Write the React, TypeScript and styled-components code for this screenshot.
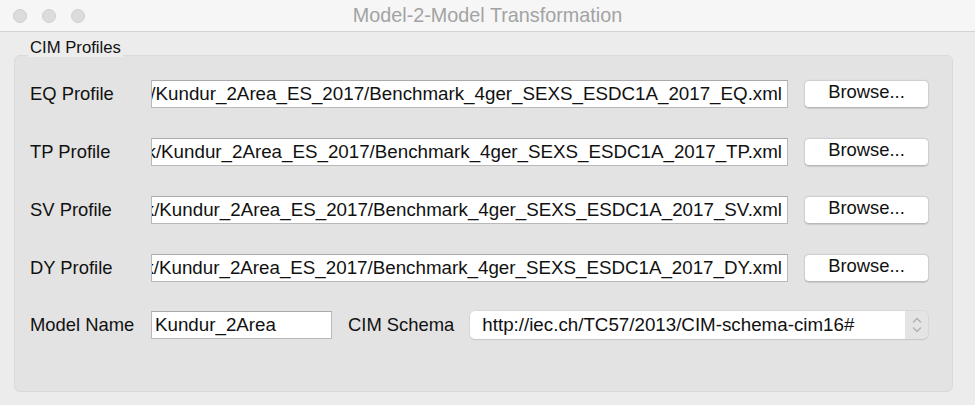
import React from 'react';
import styled, { createGlobalStyle } from 'styled-components';

const GlobalStyle = createGlobalStyle`
  html, body {
    margin: 0;
    padding: 0;
    background: #ececec;
  }
  body {
    font-family: "Liberation Sans", Arial, Helvetica, sans-serif;
    color: #111;
  }
`;

const Window = styled.div`
  width: 975px;
  height: 405px;
  background: #ececec;
  display: flex;
  flex-direction: column;
  overflow: hidden;
`;

const TitleBar = styled.div`
  height: 31px;
  flex: none;
  background: #f6f6f6;
  border-bottom: 1px solid #d3d3d3;
  position: relative;
  display: flex;
  align-items: center;
  justify-content: center;
`;

const Lights = styled.div`
  position: absolute;
  left: 13px;
  top: 9px;
  display: flex;
  gap: 15px;
`;

const Light = styled.span`
  width: 14px;
  height: 14px;
  box-sizing: border-box;
  border-radius: 50%;
  background: #dcdcdc;
  border: 0.5px solid #d0d0d0;
`;

const Title = styled.div`
  font-size: 19.8px;
  color: #a3a3a3;
`;

const Body = styled.div`
  flex: 1;
  padding: 6px 22px 13px 14px;
  display: flex;
  flex-direction: column;
`;

const GroupLabel = styled.div`
  align-self: flex-start;
  margin-left: 14px;
  padding: 0 2px;
  font-size: 16.7px;
  line-height: 19px;
  background: #ececec;
  position: relative;
  z-index: 1;
`;

const Group = styled.div`
  flex: 1;
  margin-top: -2px;
  background: #e3e3e3;
  border: 1px solid #dadada;
  border-radius: 6px;
  padding: 24px 23px 0 15px;
  display: flex;
  flex-direction: column;
  gap: 30px;
`;

const ProfileRow = styled.div`
  display: grid;
  grid-template-columns: 105px 637px 125px;
  column-gap: 16px;
  align-items: center;
  height: 28px;
`;

const Label = styled.label<{ $width?: number }>`
  font-size: 18.4px;
  white-space: nowrap;
  ${(p) => (p.$width ? `width: ${p.$width}px; flex: none;` : '')}
`;

const PathField = styled.div`
  height: 28px;
  box-sizing: border-box;
  background: #fff;
  border: 1px solid #b9b9b9;
  border-top-color: #aaaaaa;
  display: flex;
  align-items: center;
  justify-content: flex-end;
  overflow: hidden;
  padding-right: 5px;
  font-size: 18.75px;
  white-space: nowrap;
`;

const PathText = styled.span`
  flex: none;
`;

const Button = styled.button`
  height: 28px;
  box-sizing: border-box;
  background: #fff;
  border: 1px solid #cfcfcf;
  border-bottom-color: #b8b8b8;
  border-radius: 5px;
  box-shadow: 0 0.5px 1px rgba(0, 0, 0, 0.12);
  font-family: inherit;
  font-size: 18.4px;
  color: #111;
  padding: 0 0 3px;
  line-height: 1;
`;

const BottomRow = styled.div`
  display: flex;
  align-items: center;
  height: 28px;
  margin-top: -1px;
`;

const NameField = styled.div`
  margin-left: 16px;
  width: 181px;
  height: 28px;
  box-sizing: border-box;
  background: #fff;
  border: 1px solid #b9b9b9;
  border-top-color: #aaaaaa;
  display: flex;
  align-items: center;
  padding-left: 3px;
  font-size: 18.75px;
`;

const SchemaLabel = styled(Label)`
  margin-left: 16px;
`;

const Combo = styled.div`
  margin-left: 16px;
  width: 458px;
  height: 28px;
  box-sizing: border-box;
  display: flex;
  border-radius: 5px;
  box-shadow: 0 0 0 0.5px #cdcdcd, 0 1px 1px rgba(0, 0, 0, 0.15);
  overflow: hidden;
`;

const ComboText = styled.div`
  flex: 1;
  background: #fff;
  display: flex;
  align-items: center;
  padding-left: 12px;
  font-size: 18.75px;
  white-space: nowrap;
`;

const Stepper = styled.div`
  width: 23px;
  background: #e4e4e4;
  display: flex;
  align-items: center;
  justify-content: center;
`;

const profiles = ['EQ', 'TP', 'SV', 'DY'];

export default function App() {
  return (
    <Window>
      <GlobalStyle />
      <TitleBar>
        <Lights>
          <Light />
          <Light />
          <Light />
        </Lights>
        <Title>Model-2-Model Transformation</Title>
      </TitleBar>
      <Body>
        <GroupLabel>CIM Profiles</GroupLabel>
        <Group>
          {profiles.map((p) => (
            <ProfileRow key={p}>
              <Label>{p} Profile</Label>
              <PathField>
                <PathText>k/Kundur_2Area_ES_2017/Benchmark_4ger_SEXS_ESDC1A_2017_{p}.xml</PathText>
              </PathField>
              <Button>Browse...</Button>
            </ProfileRow>
          ))}
          <BottomRow>
            <Label $width={105}>Model Name</Label>
            <NameField>Kundur_2Area</NameField>
            <SchemaLabel>CIM Schema</SchemaLabel>
            <Combo>
              <ComboText>http://iec.ch/TC57/2013/CIM-schema-cim16#</ComboText>
              <Stepper>
                <svg width="10" height="18" viewBox="0 0 10 18" fill="none" stroke="#b4b4b4" strokeWidth="1.6" strokeLinecap="round" strokeLinejoin="round">
                  <path d="M1.5 6 L5 2.5 L8.5 6" />
                  <path d="M1.5 12 L5 15.5 L8.5 12" />
                </svg>
              </Stepper>
            </Combo>
          </BottomRow>
        </Group>
      </Body>
    </Window>
  );
}
